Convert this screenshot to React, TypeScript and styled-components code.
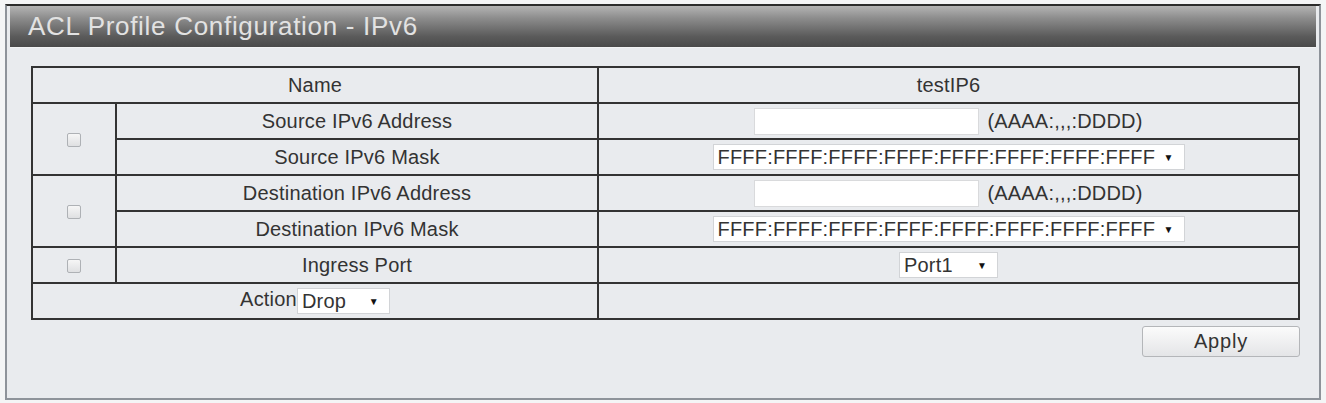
import React from "react";
import styled, { createGlobalStyle } from "styled-components";

const GlobalStyle = createGlobalStyle`
  html, body {
    margin: 0;
    padding: 0;
    background: #f4f5f6;
  }
  body {
    font-family: "Liberation Sans", Arial, sans-serif;
  }
`;

const Frame = styled.div`
  margin: 4px 5px 0 5px;
  height: 396px;
  box-sizing: border-box;
  border: 2px solid #8e939a;
  border-top: 2px solid #2c2c2c;
  padding: 0 3px;
  background: #e9ebee;
`;

const Header = styled.div`
  height: 41px;
  padding-left: 18px;
  background: linear-gradient(#b4b4b4 0%, #8c8c8c 30%, #5a5a5a 75%, #4a4a4a 100%);
  border-bottom: 1px solid #f2f3f4;
  color: #e2e2e2;
  font-size: 26px;
  line-height: 41px;
  letter-spacing: 0.7px;
  white-space: nowrap;
`;

const Content = styled.div`
  padding: 18px 16px 0 21px;
`;

const Table = styled.table`
  width: 100%;
  border-collapse: collapse;
  border: 2px solid #333;
  color: #333;
  font-size: 20px;
  letter-spacing: 0.2px;
`;

const Row = styled.tr`
  height: 36px;
`;

const Cell = styled.td`
  border: 2px solid #333;
  padding: 0;
  text-align: center;
  vertical-align: middle;
  white-space: nowrap;
`;

const Check = styled.input.attrs({ type: "checkbox", disabled: true })`
  appearance: none;
  width: 14px;
  height: 14px;
  margin: 0;
  border: 1px solid #aeb1b5;
  border-radius: 2px;
  background: linear-gradient(#f6f6f6, #dfe0e2);
  vertical-align: middle;
`;

const TextBox = styled.input`
  width: 225px;
  height: 27px;
  box-sizing: border-box;
  border: 1px solid #d9dadc;
  background: #fff;
  vertical-align: middle;
  font: inherit;
`;

const Hint = styled.span`
  margin-left: 8px;
  vertical-align: middle;
`;

const Select = styled.span<{ $width: number }>`
  display: inline-flex;
  align-items: center;
  width: ${(p) => p.$width}px;
  height: 26px;
  box-sizing: border-box;
  padding: 0 10px 0 4px;
  background: #fff;
  border: 1px solid #d2d4d7;
  vertical-align: middle;
  text-align: left;
`;

const Arrow = styled.span`
  margin-left: auto;
  font-size: 10px;
  color: #111;
`;

const Footer = styled.div`
  display: flex;
  justify-content: flex-end;
  margin-top: 6px;
`;

const Button = styled.button`
  width: 158px;
  height: 31px;
  border: 1px solid #b4b6b9;
  border-radius: 3px;
  background: linear-gradient(#fbfbfb, #e4e5e7);
  color: #333;
  font-family: "Liberation Sans", Arial, sans-serif;
  font-size: 20px;
  letter-spacing: 0.8px;
`;

const Dropdown = ({ value, width }: { value: string; width: number }) => (
  <Select $width={width}>
    {value}
    <Arrow>▼</Arrow>
  </Select>
);

const MASK = "FFFF:FFFF:FFFF:FFFF:FFFF:FFFF:FFFF:FFFF";

const App = () => (
  <>
    <GlobalStyle />
    <Frame>
      <Header>ACL Profile Configuration - IPv6</Header>
      <Content>
        <Table>
          <colgroup>
            <col style={{ width: 84 }} />
            <col style={{ width: 482 }} />
            <col />
          </colgroup>
          <tbody>
            <Row>
              <Cell colSpan={2}>Name</Cell>
              <Cell>testIP6</Cell>
            </Row>
            <Row>
              <Cell rowSpan={2}>
                <Check />
              </Cell>
              <Cell>Source IPv6 Address</Cell>
              <Cell>
                <TextBox />
                <Hint>(AAAA:,,,:DDDD)</Hint>
              </Cell>
            </Row>
            <Row>
              <Cell>Source IPv6 Mask</Cell>
              <Cell>
                <Dropdown value={MASK} width={472} />
              </Cell>
            </Row>
            <Row>
              <Cell rowSpan={2}>
                <Check />
              </Cell>
              <Cell>Destination IPv6 Address</Cell>
              <Cell>
                <TextBox />
                <Hint>(AAAA:,,,:DDDD)</Hint>
              </Cell>
            </Row>
            <Row>
              <Cell>Destination IPv6 Mask</Cell>
              <Cell>
                <Dropdown value={MASK} width={472} />
              </Cell>
            </Row>
            <Row>
              <Cell>
                <Check />
              </Cell>
              <Cell>Ingress Port</Cell>
              <Cell>
                <Dropdown value="Port1" width={99} />
              </Cell>
            </Row>
            <Row>
              <Cell colSpan={2}>
                Action
                <Dropdown value="Drop" width={93} />
              </Cell>
              <Cell />
            </Row>
          </tbody>
        </Table>
        <Footer>
          <Button>Apply</Button>
        </Footer>
      </Content>
    </Frame>
  </>
);

export default App;
